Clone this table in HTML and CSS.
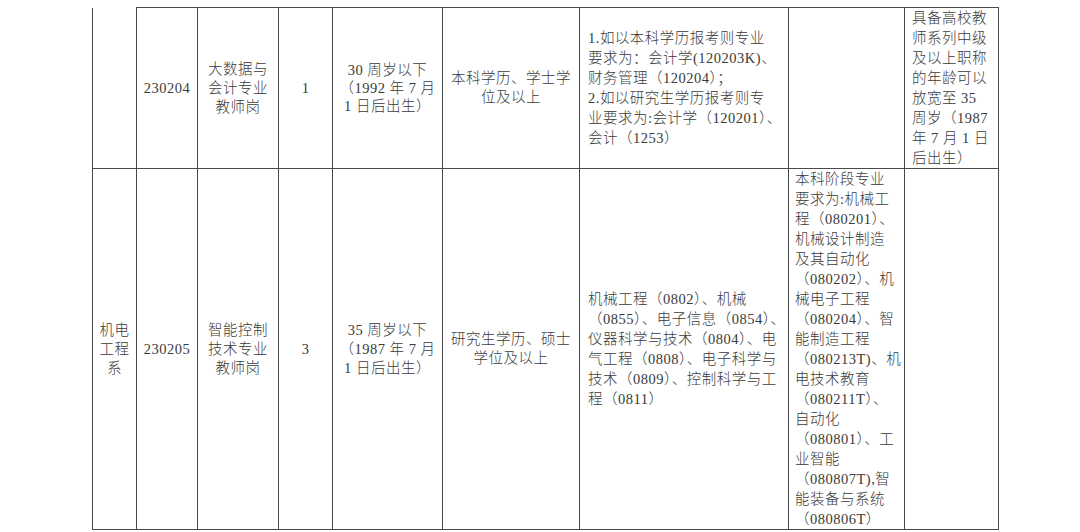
FILE: index.html
```html
<!DOCTYPE html>
<html lang="zh-CN">
<head>
<meta charset="utf-8">
<title>招聘岗位表</title>
<link rel="stylesheet" href="styles.css">
</head>
<body>
<table class="jobs">
  <colgroup>
    <col class="c-dept"><col class="c-code"><col class="c-post"><col class="c-num"><col class="c-age"><col class="c-edu"><col class="c-major"><col class="c-ug"><col class="c-note">
  </colgroup>
  <tr class="row-a">
    <td class="open-top"></td>
    <td class="ctr">230204</td>
    <td class="ctr">大数据与<br>会计专业<br>教师岗</td>
    <td class="ctr">1</td>
    <td class="ctr lh18">30 周岁以下<br>（1992 年 7 月<br>1 日后出生）</td>
    <td class="ctr">本科学历、学士学<br>位及以上</td>
    <td class="left lh20">1.如以本科学历报考则专业<br>要求为：会计学(120203K)、<br>财务管理（120204）；<br>2.如以研究生学历报考则专<br>业要求为:会计学（120201）、<br>会计（1253）</td>
    <td class="left"></td>
    <td class="left lh20 note">具备高校教<br>师系列中级<br>及以上职称<br>的年龄可以<br>放宽至 35<br>周岁（1987<br>年 7 月 1 日<br>后出生）</td>
  </tr>
  <tr class="row-b">
    <td class="ctr">机电<br>工程<br>系</td>
    <td class="ctr">230205</td>
    <td class="ctr">智能控制<br>技术专业<br>教师岗</td>
    <td class="ctr">3</td>
    <td class="ctr">35 周岁以下<br>（1987 年 7 月<br>1 日后出生）</td>
    <td class="ctr">研究生学历、硕士<br>学位及以上</td>
    <td class="left lh20">机械工程（0802）、机械<br>（0855）、电子信息（0854）、<br>仪器科学与技术（0804）、电<br>气工程（0808）、电子科学与<br>技术（0809）、控制科学与工<br>程（0811）</td>
    <td class="left lh20 ug">本科阶段专业<br>要求为:机械工<br>程（080201）、<br>机械设计制造<br>及其自动化<br>（080202）、机<br>械电子工程<br>（080204）、智<br>能制造工程<br>（080213T)、机<br>电技术教育<br>（080211T）、<br>自动化<br>（080801）、工<br>业智能<br>（080807T),智<br>能装备与系统<br>（080806T）</td>
    <td class="left"></td>
  </tr>
</table>
</body>
</html>
```

FILE: styles.css
```css
html, body {
  margin: 0;
  padding: 0;
  background: #ffffff;
}

body {
  padding: 7px 0 0 92px;
  font-family: "Liberation Serif", "Noto Sans CJK SC", serif;
  font-weight: 300;
  font-size: 14.5px;
  letter-spacing: 0.5px;
  color: #3a3a3a;
}

.jobs {
  border-collapse: collapse;
  table-layout: fixed;
  width: 906px;
}

.c-dept  { width: 44px; }
.c-code  { width: 61px; }
.c-post  { width: 81px; }
.c-num   { width: 54px; }
.c-age   { width: 110px; }
.c-edu   { width: 137px; }
.c-major { width: 209px; }
.c-ug    { width: 116px; }
.c-note  { width: 94px; }

.jobs td {
  border: 1px solid #4a4a4a;
  padding: 0;
  vertical-align: middle;
  white-space: nowrap;
  line-height: 19px;
  overflow: visible;
}

.jobs td.open-top {
  border-top: none;
}

.row-a { height: 160px; }
.row-b { height: 360px; }

.ctr { text-align: center; }
.left { text-align: left; padding-left: 8px; }

.jobs td.lh18 { line-height: 18px; }
.jobs td.lh20 { line-height: 20px; }

.jobs td.left { padding-left: 8px; }
.jobs td.ug { padding-left: 6px; }
.jobs td.note { padding-left: 7px; }
```
